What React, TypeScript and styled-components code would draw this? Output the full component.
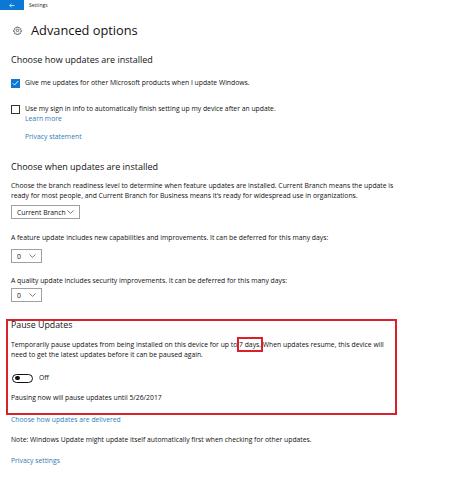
import React from "react";
import styled, { createGlobalStyle } from "styled-components";

const Global = createGlobalStyle`
  html, body { margin: 0; padding: 0; background: #ffffff; }
  body { font-family: "Open Sans", "Noto Sans", sans-serif; color: #111; }
`;

const Page = styled.div`
  width: 450px;
  height: 488px;
  overflow: hidden;
  background: #fff;
  display: flex;
  flex-direction: column;
`;

const TitleBar = styled.div`
  height: 10px;
  display: flex;
  align-items: center;
`;

const BackButton = styled.div`
  width: 24px;
  height: 10px;
  background: #0a78d4;
  display: flex;
  align-items: center;
  justify-content: center;
`;

const WindowTitle = styled.span`
  margin-left: 5px;
  font-size: 5px;
  line-height: 10px;
  color: #222;
`;

const Content = styled.div`
  padding-left: 11px;
  display: flex;
  flex-direction: column;
`;

const Header = styled.div`
  margin-top: 10px;
  height: 20px;
  display: flex;
  align-items: center;
  gap: 9px;
  padding-left: 2px;
`;

const PageTitle = styled.h1`
  margin: 0;
  font-weight: 400;
  font-size: 12.8px;
  line-height: 20px;
  color: #111;
`;

const SectionTitle = styled.h2<{ $mt: number }>`
  margin: ${(p) => p.$mt}px 0 0 0;
  font-weight: 400;
  font-size: 9px;
  line-height: 14px;
  color: #111;
`;

const Text = styled.p<{ $mt: number }>`
  margin: ${(p) => p.$mt}px 0 0 0;
  font-size: 6.8px;
  line-height: 10px;
  color: #111;
`;

const Link = styled.a<{ $mt: number; $ml?: number }>`
  display: block;
  margin: ${(p) => p.$mt}px 0 0 ${(p) => p.$ml ?? 0}px;
  font-size: 6.8px;
  line-height: 10px;
  color: #2f7db6;
  text-decoration: none;
`;

const CheckRow = styled.div<{ $mt: number }>`
  margin-top: ${(p) => p.$mt}px;
  display: flex;
  align-items: flex-start;
  gap: 5px;
`;

const Box = styled.div<{ $checked?: boolean }>`
  width: 9px;
  height: 9px;
  box-sizing: border-box;
  margin-top: 0.5px;
  flex: none;
  background: ${(p) => (p.$checked ? "#0a78d4" : "#fff")};
  border: 1px solid ${(p) => (p.$checked ? "#0a78d4" : "#333")};
  display: flex;
  align-items: center;
  justify-content: center;
`;

const LabelColumn = styled.div`
  display: flex;
  flex-direction: column;
`;

const Label = styled.span`
  font-size: 6.8px;
  line-height: 10px;
  color: #111;
`;

const Select = styled.div<{ $mt: number; $w: number }>`
  margin-top: ${(p) => p.$mt}px;
  width: ${(p) => p.$w}px;
  height: 14px;
  box-sizing: border-box;
  border: 1px solid #a0a0a0;
  display: flex;
  align-items: center;
  justify-content: space-between;
  padding: 0 5px 0 5px;
  font-size: 6.8px;
  color: #111;
`;

const PauseBox = styled.div`
  margin: 17px 0 0 -5px;
  width: 391px;
  box-sizing: border-box;
  border: 2px solid #d7222b;
  padding: 0 0 10px 3px;
  display: flex;
  flex-direction: column;
`;

const PauseTitle = styled.h2`
  margin: -1px 0 0 0;
  font-weight: 400;
  font-size: 8.8px;
  line-height: 10px;
  color: #111;
`;

const Highlight = styled.span`
  outline: 2px solid #d7222b;
  outline-offset: 0px;
  padding: 1px 0;
`;

const ToggleRow = styled.div`
  margin-top: 13px;
  height: 10px;
  display: flex;
  align-items: center;
  gap: 6px;
  padding-left: 1px;
`;

const Toggle = styled.div`
  width: 21px;
  height: 9px;
  box-sizing: border-box;
  border: 1.2px solid #111;
  border-radius: 5px;
  display: flex;
  align-items: center;
  padding-left: 2px;
`;

const Knob = styled.div`
  width: 4.5px;
  height: 4.5px;
  border-radius: 50%;
  background: #111;
`;

const Chevron = () => (
  <svg width="7" height="4" viewBox="0 0 7 4">
    <path d="M0.5 0.5 L3.5 3.3 L6.5 0.5" fill="none" stroke="#444" strokeWidth="0.7" />
  </svg>
);

const Gear = () => (
  <svg width="9" height="9" viewBox="0 0 24 24" fill="none" stroke="#333" strokeWidth="1.8">
    <circle cx="12" cy="12" r="3.2" />
    <path d="M10.3 2.5h3.4l.5 2.6 1.8.8 2.2-1.5 2.4 2.4-1.5 2.2.8 1.8 2.6.5v3.4l-2.6.5-.8 1.8 1.5 2.2-2.4 2.4-2.2-1.5-1.8.8-.5 2.6h-3.4l-.5-2.6-1.8-.8-2.2 1.5-2.4-2.4 1.5-2.2-.8-1.8-2.6-.5v-3.4l2.6-.5.8-1.8-1.5-2.2 2.4-2.4 2.2 1.5 1.8-.8z" />
  </svg>
);

export default function App() {
  return (
    <Page>
      <Global />
      <TitleBar>
        <BackButton>
          <svg width="6" height="5" viewBox="0 0 6 5">
            <path d="M5.5 2.5H0.8 M2.6 0.6 L0.8 2.5 L2.6 4.4" fill="none" stroke="#fff" strokeWidth="0.7" />
          </svg>
        </BackButton>
        <WindowTitle>Settings</WindowTitle>
      </TitleBar>
      <Content>
        <Header>
          <Gear />
          <PageTitle>Advanced options</PageTitle>
        </Header>

        <SectionTitle $mt={13}>Choose how updates are installed</SectionTitle>

        <CheckRow $mt={11}>
          <Box $checked>
            <svg width="7" height="6" viewBox="0 0 7 6">
              <path d="M0.8 3.2 L2.6 5 L6.3 0.9" fill="none" stroke="#fff" strokeWidth="0.9" />
            </svg>
          </Box>
          <Label>Give me updates for other Microsoft products when I update Windows.</Label>
        </CheckRow>

        <CheckRow $mt={16}>
          <Box />
          <LabelColumn>
            <Label>Use my sign in info to automatically finish setting up my device after an update.</Label>
            <Link $mt={0} href="#">Learn more</Link>
          </LabelColumn>
        </CheckRow>

        <Link $mt={8} $ml={14} href="#">Privacy statement</Link>

        <SectionTitle $mt={18}>Choose when updates are installed</SectionTitle>
        <Text $mt={7}>
          Choose the branch readiness level to determine when feature updates are installed. Current Branch means the update is
          <br />
          ready for most people, and Current Branch for Business means it’s ready for widespread use in organizations.
        </Text>
        <Select $mt={4} $w={69}>
          <span>Current Branch</span>
          <Chevron />
        </Select>

        <Text $mt={14}>A feature update includes new capabilities and improvements. It can be deferred for this many days:</Text>
        <Select $mt={6} $w={31}>
          <span>0</span>
          <Chevron />
        </Select>

        <Text $mt={13}>A quality update includes security improvements. It can be deferred for this many days:</Text>
        <Select $mt={2} $w={31}>
          <span>0</span>
          <Chevron />
        </Select>

        <PauseBox>
          <PauseTitle>Pause Updates</PauseTitle>
          <Text $mt={10}>
            Temporarily pause updates from being installed on this device for up to <Highlight>7 days.</Highlight> When updates resume, this device will
            <br />
            need to get the latest updates before it can be paused again.
          </Text>
          <ToggleRow>
            <Toggle>
              <Knob />
            </Toggle>
            <Label>Off</Label>
          </ToggleRow>
          <Text $mt={10}>Pausing now will pause updates until 5/26/2017</Text>
        </PauseBox>

        <Link $mt={0} href="#">Choose how updates are delivered</Link>
        <Text $mt={10}>Note: Windows Update might update itself automatically first when checking for other updates.</Text>
        <Link $mt={11} href="#">Privacy settings</Link>
      </Content>
    </Page>
  );
}
